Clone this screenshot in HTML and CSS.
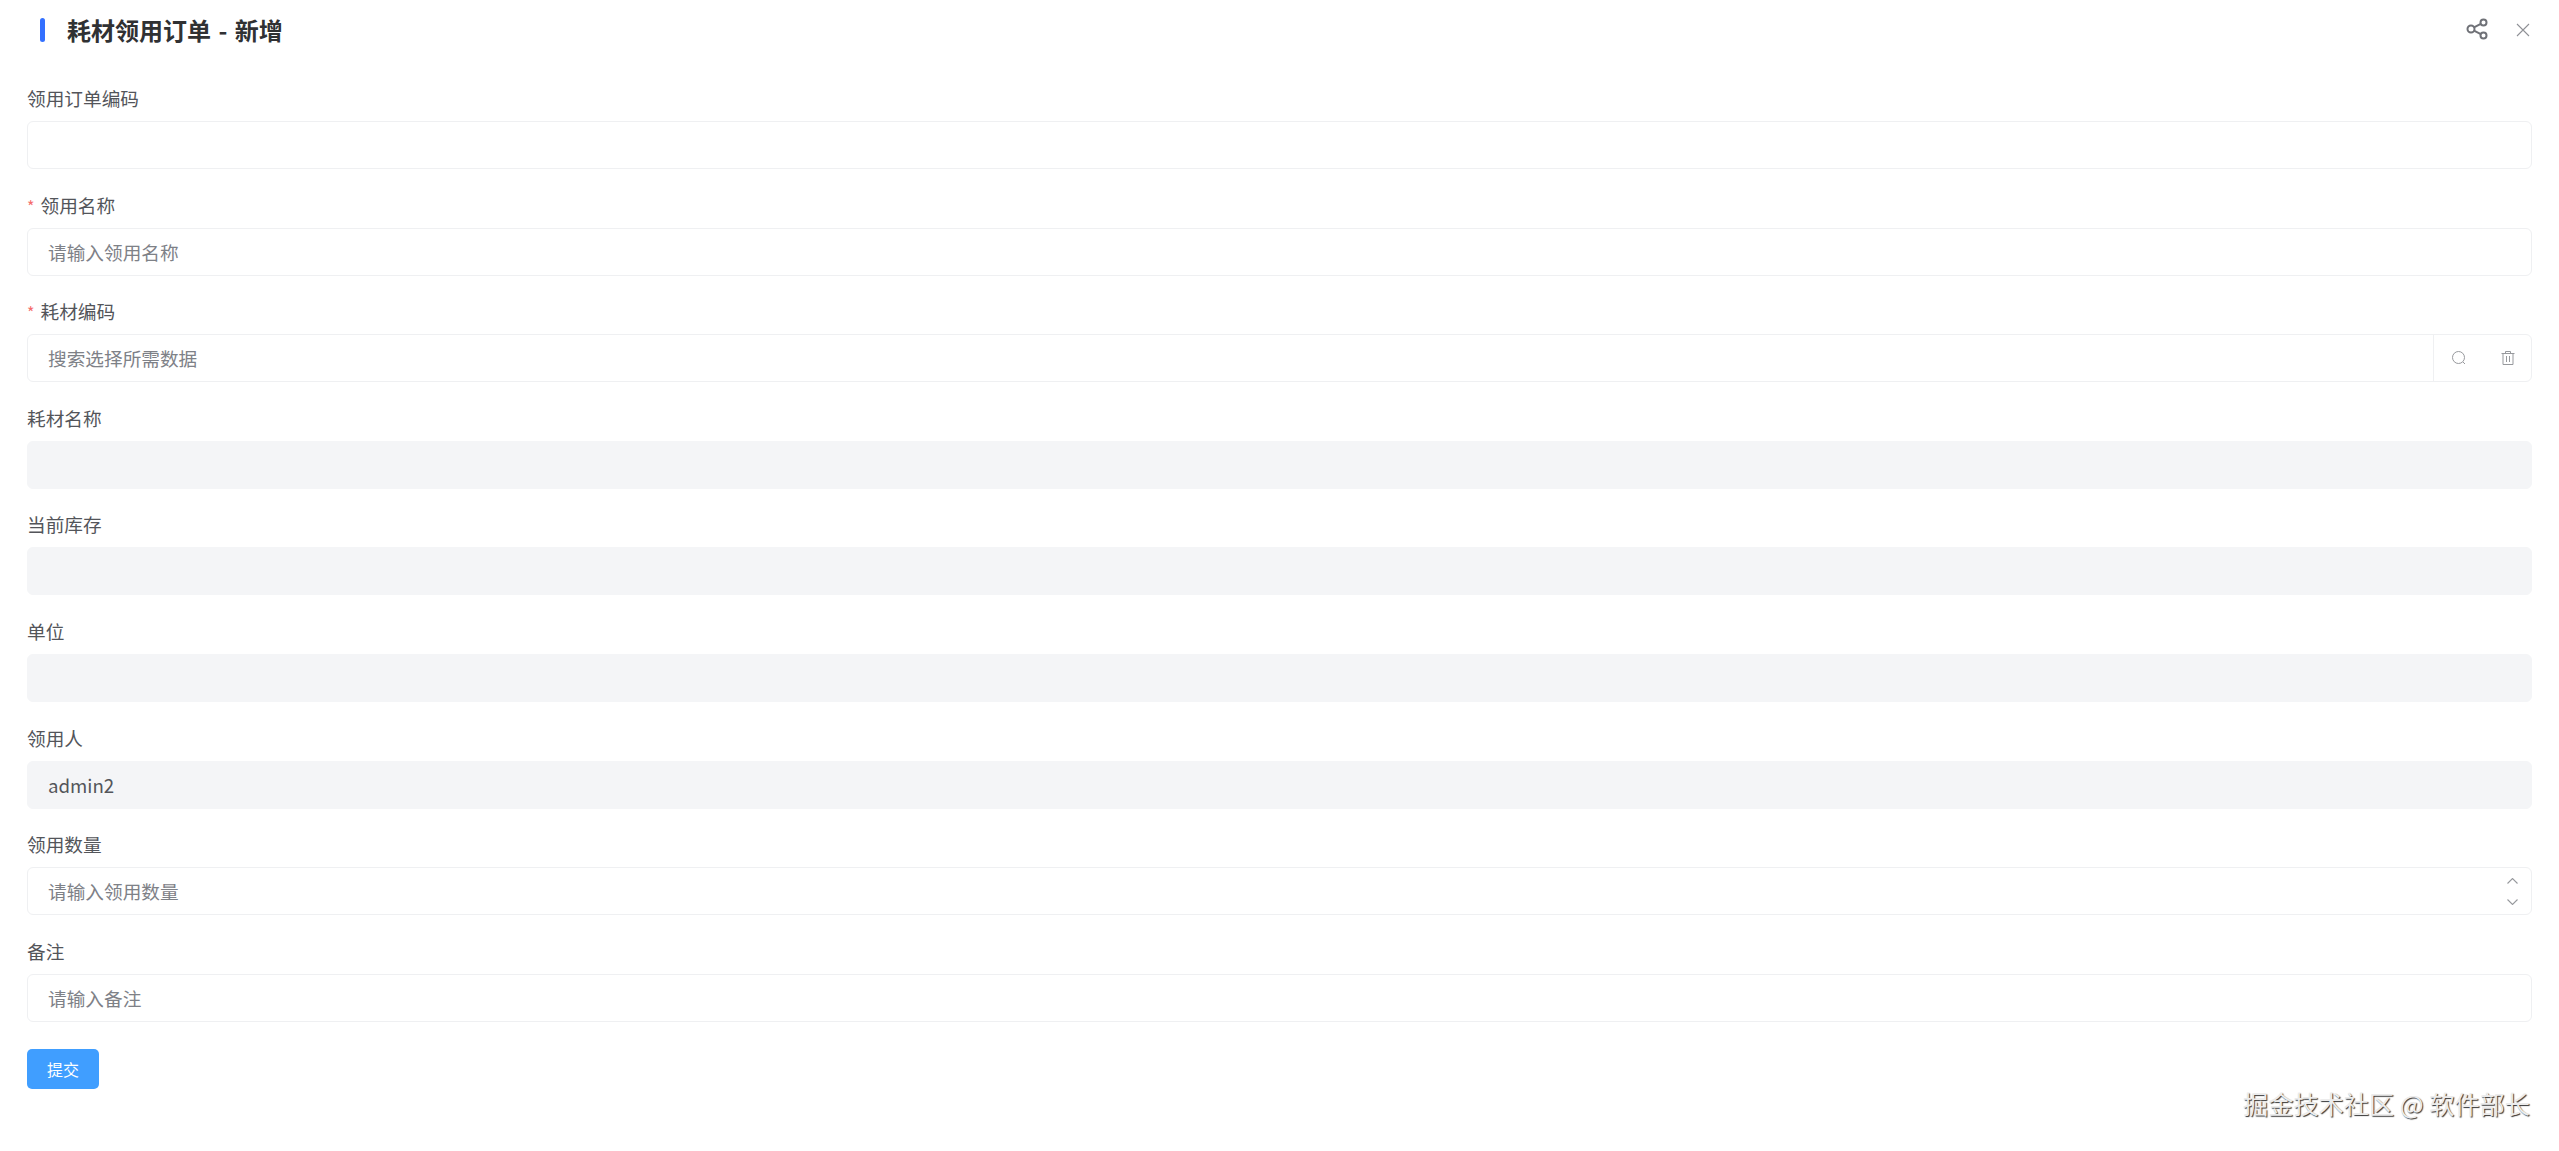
FILE: index.html
```html
<!DOCTYPE html>
<html>
<head>
  <title>耗材领用订单 - 新增</title>
  <link rel="stylesheet" href="styles.css">
</head>
<body>
  <div class="page">
    <header class="top-bar">
      <span class="title-mark"></span>
      <h1 class="title">耗材领用订单 - 新增</h1>
      <div class="top-actions">
        <svg class="icon-share" viewBox="0 0 22 22" width="22" height="22" fill="none" stroke="#6f7177" stroke-width="2">
          <circle cx="5" cy="11" r="3.5"/>
          <circle cx="17.5" cy="4.5" r="3"/>
          <circle cx="17.5" cy="17.5" r="3"/>
          <path d="M8 9.4 14.8 5.9M8 12.6l6.8 3.5"/>
        </svg>
        <svg class="icon-close" viewBox="0 0 14 14" width="14" height="14" fill="none" stroke="#8f9196" stroke-width="1.1">
          <path d="M1 1l12 12M13 1 1 13"/>
        </svg>
      </div>
    </header>

    <form class="form">
      <div class="field">
        <label class="field-label">领用订单编码</label>
        <div class="input"></div>
      </div>
      <div class="field">
        <label class="field-label"><span class="star">*</span>领用名称</label>
        <div class="input placeholder">请输入领用名称</div>
      </div>
      <div class="field">
        <label class="field-label"><span class="star">*</span>耗材编码</label>
        <div class="input placeholder with-addon">
          <span class="input-text">搜索选择所需数据</span>
          <div class="addon">
            <svg viewBox="0 0 16 16" width="16" height="16" fill="none" stroke="#97999d" stroke-width="1">
              <circle cx="7.5" cy="7.5" r="6"/>
              <path d="M12 12l2 2"/>
            </svg>
            <svg viewBox="0 0 16 16" width="16" height="16" fill="none" stroke="#97999d" stroke-width="1">
              <path d="M1.5 3.5h13M5.5 3.5V1.5h5v2M3 3.5v11h10v-11M6.5 6v6M9.5 6v6"/>
            </svg>
          </div>
        </div>
      </div>
      <div class="field">
        <label class="field-label">耗材名称</label>
        <div class="input disabled"></div>
      </div>
      <div class="field">
        <label class="field-label">当前库存</label>
        <div class="input disabled"></div>
      </div>
      <div class="field">
        <label class="field-label">单位</label>
        <div class="input disabled"></div>
      </div>
      <div class="field">
        <label class="field-label">领用人</label>
        <div class="input disabled filled">admin2</div>
      </div>
      <div class="field">
        <label class="field-label">领用数量</label>
        <div class="input placeholder with-stepper">
          <span class="input-text">请输入领用数量</span>
          <div class="stepper">
            <svg viewBox="0 0 11 6" width="11" height="6" fill="none" stroke="#97999d" stroke-width="1.1"><path d="M.5 5.5l5-5 5 5"/></svg>
            <svg viewBox="0 0 11 6" width="11" height="6" fill="none" stroke="#97999d" stroke-width="1.1"><path d="M.5.5l5 5 5-5"/></svg>
          </div>
        </div>
      </div>
      <div class="field">
        <label class="field-label">备注</label>
        <div class="input placeholder">请输入备注</div>
      </div>
      <button class="submit" type="button">提交</button>
    </form>
  </div>
  <div class="watermark">掘金技术社区 @ 软件部长</div>
</body>
</html>
```

FILE: styles.css
```css
body {
  margin: 0;
  height: 1151px;
  overflow: hidden;
  background-color: #fff;
  color: #303133;
  font-family: "Noto Sans CJK SC", "Noto Sans", sans-serif;
  font-size: 18.67px;
}

.page {
  display: flex;
  flex-direction: column;
}

.top-bar {
  display: flex;
  align-items: center;
  height: 60px;
  padding: 0 29px 0 40px;
}

.title-mark {
  width: 5px;
  height: 24px;
  border-radius: 3px;
  background-color: #3370ff;
  margin-right: 22px;
}

.title {
  margin: 0;
  font-size: 24px;
  font-weight: 700;
  line-height: 32px;
  word-spacing: 2px;
  color: #303133;
}

.top-actions {
  margin-left: auto;
  display: flex;
  align-items: center;
  gap: 28px;
}

.icon-share {
  position: relative;
  top: -1px;
}

.form {
  display: flex;
  flex-direction: column;
  padding: 25px 27px 0;
}

.field {
  height: 106.6px;
}

.field-label {
  display: block;
  height: 36px;
  line-height: 25px;
  color: #53555a;
}

.star {
  color: #f56c6c;
  margin-right: 6px;
  font-size: 16px;
}

.input {
  display: flex;
  align-items: center;
  box-sizing: border-box;
  height: 48px;
  padding: 0 20px;
  border: 1px solid #eff0f2;
  border-radius: 6px;
  line-height: 46px;
}

.placeholder {
  color: #7e8187;
}

.disabled {
  background-color: #f4f5f7;
  border-color: #f4f5f7;
}

.filled {
  color: #53555a;
}

.with-addon,
.with-stepper {
  justify-content: space-between;
  padding-right: 0;
}

.addon {
  display: flex;
  align-items: center;
  justify-content: space-between;
  box-sizing: border-box;
  width: 98px;
  height: 100%;
  padding: 0 15px 0 17px;
  border-left: 1px solid #eff0f2;
}

.stepper {
  display: flex;
  flex-direction: column;
  gap: 15px;
  padding-right: 13px;
}

.stepper svg {
  display: block;
}

.submit {
  align-self: flex-start;
  width: 72px;
  height: 40px;
  margin-top: 5px;
  padding: 0;
  border: none;
  border-radius: 5px;
  background-color: #409eff;
  color: #fff;
  font-family: inherit;
  font-size: 16px;
}

/* sits over the page, bottom right */
.watermark {
  position: absolute;
  right: 29px;
  top: 1087px;
  font-size: 25.2px;
  line-height: 32px;
  color: #ececec;
  text-shadow: 1px 1px 1px #333;
}
```
